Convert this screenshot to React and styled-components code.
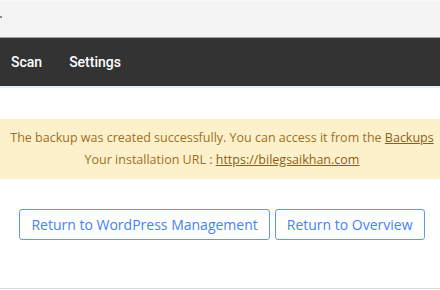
import styled, { createGlobalStyle } from "styled-components";

const GlobalStyle = createGlobalStyle`
  body {
    margin: 0;
    background: #ffffff;
  }
`;

const Page = styled.div`
  min-height: 290px;
  display: flex;
  flex-direction: column;
  overflow: hidden;
`;

const TopBar = styled.div`
  height: 36px;
  background: #f4f4f4;
  border-top: 1px solid #f9f9f9;
  border-bottom: 1px solid #a4a4a4;
  display: flex;
  align-items: center;
`;

const Crumb = styled.span`
  width: 2px;
  height: 2px;
  background: #8a8a8a;
  margin-top: -4px;
`;

const Nav = styled.nav`
  height: 48px;
  background: #333333;
  border-bottom: 2px solid #e8edf2;
  display: flex;
  align-items: center;
  gap: 27px;
  padding-left: 11px;
`;

const NavItem = styled.a`
  font-family: Roboto, "Liberation Sans", sans-serif;
  font-weight: 500;
  font-size: 14px;
  color: #ffffff;
  text-decoration: none;
`;

const Content = styled.div`
  flex: 1;
  padding-top: 31px;
  font-family: "Open Sans", "DejaVu Sans", sans-serif;
`;

const Alert = styled.div`
  background: #fdf1cb;
  color: #9e6f24;
  height: 60px;
  display: flex;
  flex-direction: column;
  align-items: center;
  justify-content: center;
  font-size: 12.5px;
  line-height: 22px;
  white-space: nowrap;
  padding-left: 4px;
`;

const Link = styled.a`
  color: #8c5e17;
  text-decoration: underline;
`;

const Actions = styled.div`
  display: flex;
  justify-content: center;
  gap: 5px;
  margin-top: 30px;
  padding-left: 4px;
`;

const Button = styled.button`
  font-family: inherit;
  font-size: 14px;
  color: #4383f2;
  background: #ffffff;
  border: 1px solid #5a9af4;
  border-radius: 3px;
  height: 31px;
  padding: 0 11px;
  cursor: pointer;
`;

const Footer = styled.div`
  height: 1px;
  background: #dcdcdc;
  margin-bottom: 1px;
`;

export default function App() {
  return (
    <Page>
      <GlobalStyle />
      <TopBar>
        <Crumb />
      </TopBar>
      <Nav>
        <NavItem>Scan</NavItem>
        <NavItem>Settings</NavItem>
      </Nav>
      <Content>
        <Alert>
          <div>
            The backup was created successfully. You can access it from the{" "}
            <Link>Backups</Link>
          </div>
          <div>
            Your installation URL : <Link>https://bilegsaikhan.com</Link>
          </div>
        </Alert>
        <Actions>
          <Button>Return to WordPress Management</Button>
          <Button>Return to Overview</Button>
        </Actions>
      </Content>
      <Footer />
    </Page>
  );
}
